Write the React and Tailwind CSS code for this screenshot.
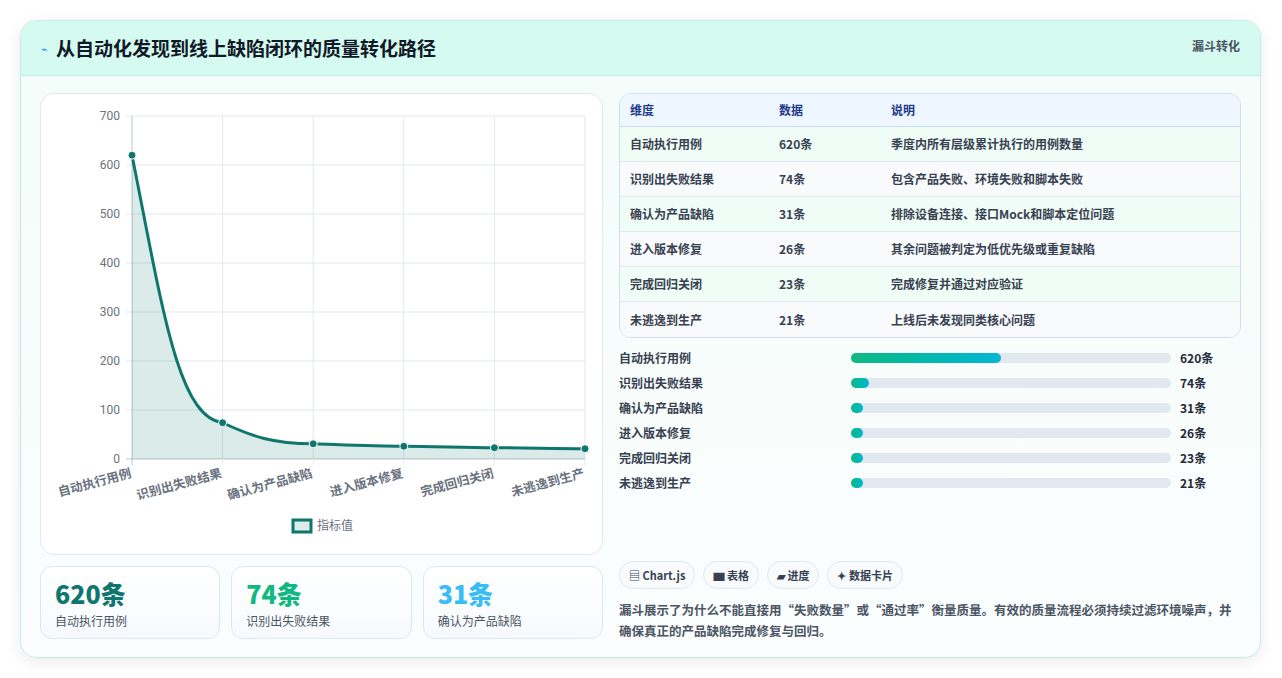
const F = { fontFamily: '"Noto Sans CJK SC","Noto Sans",sans-serif' };
const rows = [
  ['自动执行用例', '620条', '季度内所有层级累计执行的用例数量', 620],
  ['识别出失败结果', '74条', '包含产品失败、环境失败和脚本失败', 74],
  ['确认为产品缺陷', '31条', '排除设备连接、接口Mock和脚本定位问题', 31],
  ['进入版本修复', '26条', '其余问题被判定为低优先级或重复缺陷', 26],
  ['完成回归关闭', '23条', '完成修复并通过对应验证', 23],
  ['未逃逸到生产', '21条', '上线后未发现同类核心问题', 21],
];
const L = 91, R = 544, T = 22, B = 365;
const xs = rows.map((_, i) => L + (i * (R - L)) / 5);
const ys = rows.map(r => B - r[3] * 0.49);

function Chart() {
  const line = `M${xs[0]},${ys[0]} C${xs[0] + 30},${ys[0] + 150} ${xs[1] - 45},${ys[1] - 5} ${xs[1]},${ys[1]} C${xs[1] + 30},${ys[1] + 14} ${xs[2] - 40},${ys[2]} ${xs[2]},${ys[2]} C${xs[2] + 30},${ys[2] + 1} ${xs[3] - 30},${ys[3]} ${xs[3]},${ys[3]} C${xs[3] + 30},${ys[3]} ${xs[4] - 30},${ys[4]} ${xs[4]},${ys[4]} C${xs[4] + 30},${ys[4]} ${xs[5] - 30},${ys[5]} ${xs[5]},${ys[5]}`;
  return (
    <svg width="561" height="459" className="block">
      {[0, 1, 2, 3, 4, 5, 6, 7].map(i => {
        const y = B - i * 49;
        return (
          <g key={i}>
            <line x1={L - 6} x2={R} y1={y} y2={y} stroke={i === 0 ? '#b8c4cc' : '#e3e8ee'} />
            <text x={L - 12} y={y + 4} textAnchor="end" fontSize="12" fill="#6b7280" fontFamily="Roboto,sans-serif">{i * 100}</text>
          </g>
        );
      })}
      {xs.map((x, i) => <line key={i} x1={x} x2={x} y1={T} y2={B + 6} stroke={i === 0 ? '#b8c4cc' : '#e3e8ee'} />)}
      <path d={`${line} L${R},${B} L${L},${B} Z`} fill="#0f766e" fillOpacity="0.15" />
      <path d={line} fill="none" stroke="#0f766e" strokeWidth="3" />
      {xs.map((x, i) => <circle key={i} cx={x} cy={ys[i]} r="4" fill="#0f766e" stroke="#fff" strokeWidth="1" />)}
      {rows.map((r, i) => (
        <text key={i} x={xs[i]} y={B + 18} textAnchor="end" fontSize="12.5" fill="#6b7280" fontWeight="600" transform={`rotate(-15 ${xs[i]} ${B + 18})`} style={F}>{r[0]}</text>
      ))}
      <rect x="252" y="426" width="18" height="12" fill="#0f766e" fillOpacity="0.15" stroke="#0f766e" strokeWidth="3" />
      <text x="276" y="436" fontSize="12" fill="#6b7280" style={F}>指标值</text>
    </svg>
  );
}

export default function App() {
  return (
    <div className="w-[1282px] h-[678px] bg-white p-[20px] pt-[20px]" style={F}>
      <div className="w-[1241px] h-[638px] rounded-[16px] border border-[#bfeee0] bg-gradient-to-b from-[#f3fdf9] to-[#fbfdfe] shadow-[0_4px_16px_rgba(0,0,0,0.08)] overflow-hidden flex flex-col">
        <div className="h-[55px] bg-[#d5faef] border-b border-[#c4eedf] flex items-center justify-between px-[20px]">
          <div className="flex items-center gap-[8px]">
            <span className="text-[#3b82f6] text-[11px]">⌁</span>
            <span className="text-[19px] font-bold text-[#111827]">从自动化发现到线上缺陷闭环的质量转化路径</span>
          </div>
          <span className="text-[12px] font-bold text-[#4b5563] self-start mt-[16px]">漏斗转化</span>
        </div>
        <div className="flex gap-[16px] px-[19px] pt-[17px]">
          <div className="w-[564px] flex flex-col gap-[11px]">
            <div className="h-[462px] rounded-[14px] border border-[#e2e8f0] bg-white"><Chart /></div>
            <div className="grid grid-cols-3 gap-[11px]">
              {[['620条', '自动执行用例', 'text-[#0f766e]'], ['74条', '识别出失败结果', 'text-[#10b981]'], ['31条', '确认为产品缺陷', 'text-[#38bdf8]']].map(c => (
                <div key={c[1]} className="h-[73px] rounded-[12px] border border-[#dbe7f3] bg-gradient-to-b from-white to-[#f7fafd] px-[14px] pt-[9px]">
                  <div className={`text-[25px] font-extrabold leading-[34px] ${c[2]}`}>{c[0]}</div>
                  <div className="text-[12px] text-[#4b5563] mt-[2px]">{c[1]}</div>
                </div>
              ))}
            </div>
          </div>
          <div className="w-[624px] flex flex-col">
            <div className="rounded-[12px] border border-[#cfe0ea] overflow-hidden text-[12px]">
              <div className="h-[33px] bg-[#eef6ff] border-b border-[#cddbee] flex items-center px-[10px] font-bold text-[#1e3a8a]">
                <span className="w-[149px]">维度</span><span className="w-[112px]">数据</span><span>说明</span>
              </div>
              {rows.map((r, i) => (
                <div key={i} className={`h-[35px] flex items-center px-[10px] font-semibold text-[#374151] ${i < 5 ? 'border-b border-[#e2e8f0]' : ''} ${i % 2 ? 'bg-[#f8fafc]' : 'bg-[#f0fdf6]'}`}>
                  <span className="w-[149px]">{r[0]}</span><span className="w-[112px]">{r[1]}</span><span>{r[2]}</span>
                </div>
              ))}
            </div>
            <div className="flex flex-col mt-[7px]">
              {rows.map((r, i) => (
                <div key={i} className="h-[25px] flex items-center text-[12px] font-semibold text-[#374151]">
                  <span className="w-[232px]">{r[0]}</span>
                  <div className="w-[320px] h-[10px] rounded-full bg-[#e2e8f0]">
                    <div className="h-full rounded-full bg-gradient-to-r from-[#10b981] to-[#06b6d4]" style={{ width: Math.max(12, (r[3] / 620) * 150) + 'px' }} />
                  </div>
                  <span className="ml-[9px] font-bold text-[#1f2937]">{r[1]}</span>
                </div>
              ))}
            </div>
            <div className="flex gap-[8px] mt-[66px] text-[11px] font-bold text-[#374151]">
              {['▤ Chart.js', '▆ 表格', '▰ 进度', '✦ 数据卡片'].map(t => (
                <span key={t} className="h-[28px] px-[9px] flex items-center rounded-full border border-[#e2e8f0] bg-[#f8fafc]">{t}</span>
              ))}
            </div>
            <p className="mt-[10px] text-[12.5px] leading-[21px] font-semibold text-[#4b5563]">漏斗展示了为什么不能直接用“失败数量”或“通过率”衡量质量。有效的质量流程必须持续过滤环境噪声，并确保真正的产品缺陷完成修复与回归。</p>
          </div>
        </div>
      </div>
    </div>
  );
}
